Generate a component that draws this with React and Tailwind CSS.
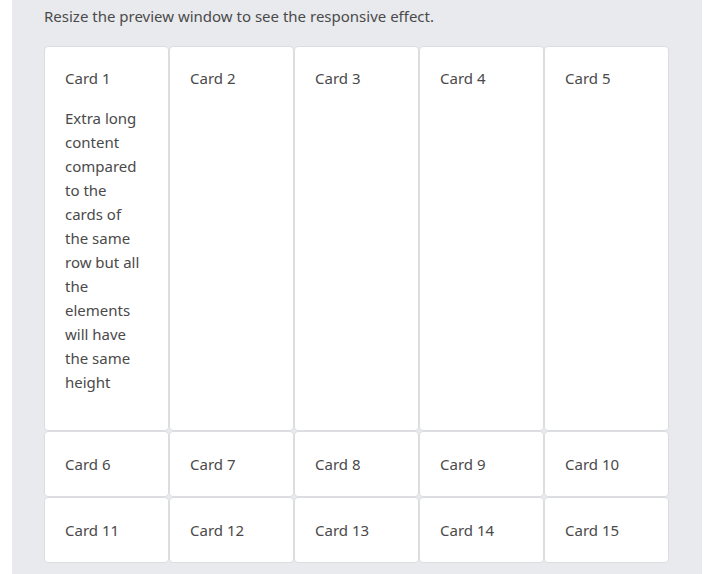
export default function App() {
  const rest = [2, 3, 4, 5];
  const lower = [6, 7, 8, 9, 10, 11, 12, 13, 14, 15];

  return (
    <div className="min-h-screen bg-white" style={{ fontFamily: '"Noto Sans", "Open Sans", sans-serif' }}>
      <div className="ml-3 w-[690px] bg-[#e9eaee] pl-8 pr-[33px] pt-[4px] pb-3 text-[15px] leading-6 text-[#4a4a4a]">
        <p className="mb-[18px]">Resize the preview window to see the responsive effect.</p>

        <div className="grid grid-cols-5 w-[625px]">
          {/* first card carries the long text, the rest of the row stretches to match */}
          <div className="bg-white border border-[#dcdde0] rounded-[4px] px-5 pt-[19px] pb-[36px]">
            <p className="mb-4">Card 1</p>
            <p>Extra long content compared to the cards of the same row but all the elements will have the same height</p>
          </div>
          {rest.map(n => (
            <div key={n} className="bg-white border border-[#dcdde0] rounded-[4px] px-5 pt-[19px]">
              <p>Card {n}</p>
            </div>
          ))}
          {lower.map(n => (
            <div key={n} className="bg-white border border-[#dcdde0] rounded-[4px] px-5 py-5">
              <p>Card {n}</p>
            </div>
          ))}
        </div>
      </div>
    </div>
  );
}
